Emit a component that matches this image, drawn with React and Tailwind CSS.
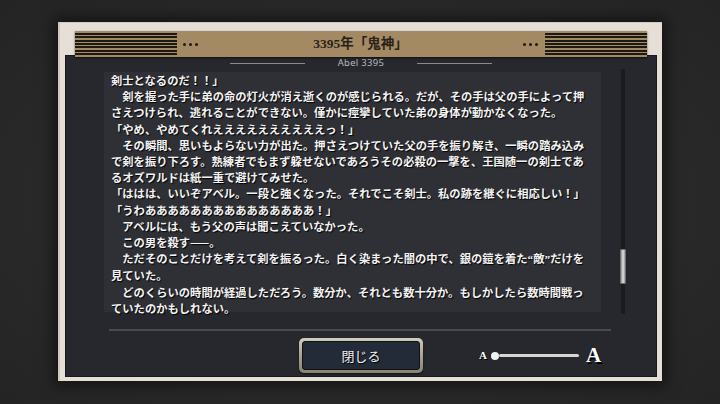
import React from "react";

const storyLines = [
  "剣士となるのだ！！」",
  "　剣を握った手に弟の命の灯火が消え逝くのが感じられる。だが、その手は父の手によって押",
  "さえつけられ、逃れることができない。僅かに痙攣していた弟の身体が動かなくなった。",
  "「やめ、やめてくれええええええええええっ！」",
  "　その瞬間、思いもよらない力が出た。押さえつけていた父の手を振り解き、一瞬の踏み込み",
  "で剣を振り下ろす。熟練者でもまず躱せないであろうその必殺の一撃を、王国随一の剣士であ",
  "るオズワルドは紙一重で避けてみせた。",
  "「ははは、いいぞアベル。一段と強くなった。それでこそ剣士。私の跡を継ぐに相応しい！」",
  "「うわあああああああああああああああ！」",
  "　アベルには、もう父の声は聞こえていなかった。",
  "　この男を殺す——。",
  null, // line with the quoted word, rendered below
  "見ていた。",
  "　どのくらいの時間が経過しただろう。数分か、それとも数十分か。もしかしたら数時間戦っ",
  "ていたのかもしれない。",
];

const Stripes = () => (
  <div className="w-[102px] h-[24px] flex flex-col justify-between py-[1px]">
    {[0, 1, 2, 3, 4, 5, 6].map((i) => (
      <div key={i} className="h-[2px] bg-[#1d1915]" />
    ))}
  </div>
);

const Dots = () => (
  <div className="flex gap-[3px]">
    <div className="w-[3px] h-[3px] rounded-full bg-[#1f1a14]" />
    <div className="w-[3px] h-[3px] rounded-full bg-[#1f1a14]" />
    <div className="w-[3px] h-[3px] rounded-full bg-[#1f1a14]" />
  </div>
);

const serif = { fontFamily: '"Liberation Serif", serif' };

export default function App() {
  return (
    <div className="w-[720px] h-[404px] overflow-hidden bg-[radial-gradient(ellipse_at_center,#313131_0%,#2a2a2a_55%,#242424_100%)] flex justify-center pt-[22px]">
      {/* outer beige frame */}
      <div className="w-[604px] h-[359px] bg-[#e5dfd8] border-l-2 border-t border-[#cfc9c2] shadow-[0_0_14px_4px_rgba(0,0,0,0.55)] flex flex-col pt-[8px] px-[5px] pb-[4px]">
        {/* header bar */}
        <div className="relative z-10 mx-[10px] h-[26px] bg-[#a38a62] flex items-center shadow-[0_1px_2px_rgba(0,0,0,0.6)]">
          <Stripes />
          <div className="ml-[6px]">
            <Dots />
          </div>
          <div
            className="flex-1 text-center text-[13.5px] leading-none text-[#2a2218] font-semibold"
            style={{ fontFamily: '"Liberation Serif", "Noto Sans CJK JP", serif' }}
          >
            3395年「鬼神」
          </div>
          <div className="mr-[7px]">
            <Dots />
          </div>
          <Stripes />
        </div>

        {/* dark content panel */}
        <div className="flex-1 -mt-[2px] bg-[#26282d] border border-[#18191c] flex flex-col">
          {/* speaker */}
          <div className="h-[12px] mt-[1px] flex items-center justify-center gap-[33px]">
            <div className="w-[75px] h-px bg-[#8c8c8c]" />
            <span
              className="text-[9.5px] leading-none text-[#b4b8bd] tracking-[0.3px]"
              style={{ fontFamily: '"Noto Sans", sans-serif' }}
            >
              Abel 3395
            </span>
            <div className="w-[75px] h-px bg-[#8c8c8c]" />
          </div>

          {/* story text + scrollbar */}
          <div className="flex mt-[3px]">
            <div
              className="ml-[38px] w-[497px] h-[240px] bg-[#2e3036] pl-[7px] text-[11.3px] leading-[16.2px] text-[#f3f3f3] font-bold [text-shadow:1px_1px_1px_#000]"
              style={{ fontFamily: '"Noto Sans CJK JP", sans-serif' }}
            >
              {storyLines.map((line, i) =>
                line === null ? (
                  <div key={i} className="whitespace-nowrap">
                    {"　ただそのことだけを考えて剣を振るった。白く染まった闇の中で、銀の鎧を着た"}
                    <span style={serif}>“</span>
                    {"敵"}
                    <span style={serif}>”</span>
                    {"だけを"}
                  </div>
                ) : (
                  <div key={i} className="whitespace-nowrap">
                    {line}
                  </div>
                )
              )}
            </div>
            <div className="ml-[19px] -mt-[3px] w-[6px] h-[245px] flex justify-center relative">
              <div className="w-[4px] h-full bg-[#1a1b1e]" />
              <div className="absolute left-0 top-[180px] w-[6px] h-[35px] rounded-[1px] bg-gradient-to-r from-[#8e8e8e] via-[#e2e2e2] to-[#9a9a9a] border border-[#6c6c6c]" />
            </div>
          </div>

          {/* separator */}
          <div className="ml-[43px] w-[502px] h-[2px] bg-[#474b51] mt-[15px]" />

          {/* bottom controls */}
          <div className="grid grid-cols-[1fr_auto_1fr] items-center mt-[7px]">
            <div />
            <div className="w-[124px] h-[35px] p-[3px] rounded-[5px] bg-gradient-to-b from-[#d2ccba] via-[#aaa391] to-[#8a8372] shadow-[0_1px_2px_rgba(0,0,0,0.6)]">
              <div
                className="w-full h-full rounded-[3px] bg-[#232a38] border border-[#0f1219] flex items-center justify-center text-[13px] text-[#f0f0f0] [text-shadow:1px_1px_1px_#000]"
                style={{ fontFamily: '"Noto Sans CJK JP", sans-serif' }}
              >
                閉じる
              </div>
            </div>
            <div className="flex items-center ml-[56px]">
              <span
                className="text-[11px] font-bold text-white leading-none [text-shadow:1px_1px_0_#000]"
                style={serif}
              >
                A
              </span>
              <div className="ml-[4px] w-[8px] h-[8px] rounded-full bg-[#f2f2f2]" />
              <div className="w-[80px] h-[3px] rounded-full bg-[#d6d6d6]" />
              <span
                className="ml-[7px] text-[21px] font-bold text-white leading-none [text-shadow:1.5px_1.5px_0_#000]"
                style={serif}
              >
                A
              </span>
            </div>
          </div>
        </div>
      </div>
    </div>
  );
}
